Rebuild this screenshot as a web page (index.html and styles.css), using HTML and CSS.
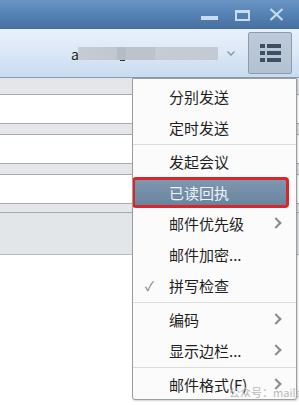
FILE: index.html
```html
<!DOCTYPE html>
<html lang="zh-CN">
<head>
  <meta charset="UTF-8">
  <title>写邮件</title>
  <link rel="stylesheet" href="styles.css">
</head>
<body>
  <div class="window">
    <!-- title bar -->
    <div class="titlebar">
      <span class="ctrl ctrl-min"></span>
      <span class="ctrl ctrl-max"></span>
      <svg class="ctrl-close" width="15" height="13" viewBox="0 0 15 13">
        <path d="M1.5 1 L13.5 12 M13.5 1 L1.5 12" stroke="#c9dcef" stroke-width="2.2" fill="none"/>
      </svg>
    </div>

    <!-- toolbar -->
    <div class="toolbar">
      <div class="account">
        <span class="account-a">a</span>
        <span class="account-blur"></span>
        <span class="account-under"></span>
      </div>
      <svg class="chevron" width="8" height="5" viewBox="0 0 8 5">
        <path d="M0.5 0.5 L4 4 L7.5 0.5" stroke="#8592a2" stroke-width="1.3" fill="none"/>
      </svg>
      <button class="menu-btn">
        <svg width="22" height="19" viewBox="0 0 22 19">
          <rect x="0" y="0" width="5" height="4" fill="#3e4f64"/>
          <rect x="7" y="0" width="14" height="4" fill="#3e4f64"/>
          <rect x="0" y="7" width="5" height="4" fill="#3e4f64"/>
          <rect x="7" y="7" width="14" height="4" fill="#3e4f64"/>
          <rect x="0" y="14" width="5" height="4" fill="#3e4f64"/>
          <rect x="7" y="14" width="14" height="4" fill="#3e4f64"/>
        </svg>
      </button>
    </div>

    <!-- form rows behind the menu -->
    <div class="content">
      <div class="band band-top"></div>
      <div class="field"></div>
      <div class="band"></div>
      <div class="field"></div>
      <div class="band"></div>
      <div class="field"></div>
      <div class="band band-thin"></div>
      <div class="attach"></div>
      <div class="body-area"></div>
    </div>

    <!-- drop down menu -->
    <div class="menu">
      <div class="item">分别发送</div>
      <div class="item">定时发送</div>
      <div class="sep"></div>
      <div class="item">发起会议</div>
      <div class="item item-active">已读回执</div>
      <div class="item">邮件优先级<span class="arrow"></span></div>
      <div class="item">邮件加密...</div>
      <div class="item"><span class="check">✓</span>拼写检查</div>
      <div class="sep"></div>
      <div class="item">编码<span class="arrow"></span></div>
      <div class="item">显示边栏...<span class="arrow"></span></div>
      <div class="sep"></div>
      <div class="item">邮件格式(F)<span class="arrow"></span></div>
    </div>

    <div class="watermark">公众号：mailabc</div>
  </div>
</body>
</html>
```

FILE: styles.css
```css
body {
  margin: 0;
  font-family: "Noto Sans CJK SC", "Noto Sans", sans-serif;
  background: #ffffff;
}
.window {
  position: relative;
  width: 299px;
  height: 405px;
  overflow: hidden;
}

/* title bar */
.titlebar {
  height: 29px;
  background: linear-gradient(180deg, #6994c4 0%, #5582b5 50%, #456f9f 100%);
  display: flex;
  align-items: flex-start;
  justify-content: flex-end;
}
.ctrl {
  display: block;
}
.ctrl-min {
  width: 17px;
  height: 4px;
  margin-top: 16px;
  background: #c9dcef;
}
.ctrl-max {
  width: 11px;
  height: 6px;
  margin: 10px 0 0 17px;
  border: 2px solid #c9dcef;
  border-top-width: 3px;
}
.ctrl-close {
  margin: 8px 15px 0 19px;
}

/* toolbar */
.toolbar {
  height: 48px;
  border-bottom: 1px solid #8a9bb0;
  background: linear-gradient(180deg, #e8f1fb 0%, #dbe8f6 50%, #c8dbef 100%);
  display: flex;
  align-items: center;
}
.account {
  position: relative;
  display: flex;
  align-items: center;
  margin-left: 71px;
  height: 20px;
}
.account-a {
  font-size: 14px;
  color: #222;
  line-height: 14px;
  margin-top: 2px;
}
.account-blur {
  width: 140px;
  height: 13px;
  margin-left: -1px;
  background: linear-gradient(90deg, #c5ccd4 0%, #c0c7cf 28%, #b4bcc5 28%, #b4bcc5 34%, #bcc3cb 34%, #bcc3cb 55%, #c6ccd3 55%, #c3cad1 100%);
}
.account-under {
  position: absolute;
  left: 49px;
  top: 17px;
  width: 5px;
  height: 1px;
  background: #333;
}
.chevron {
  margin-left: 9px;
}
.menu-btn {
  margin-left: 13px;
  width: 44px;
  height: 42px;
  padding: 0;
  border: 1px solid #8c9cae;
  border-radius: 2px;
  background: linear-gradient(180deg, #bccad9 0%, #b3c2d2 100%);
  display: flex;
  align-items: center;
  justify-content: center;
}
.menu-btn svg {
  margin-left: 2px;
}

/* form rows */
.content {
  display: flex;
  flex-direction: column;
}
.band {
  height: 10px;
  background: #e4e6e9;
  border-bottom: 1px solid #a7abaf;
}
.band-top {
  height: 16px;
}
.band-thin {
  height: 8px;
}
.field {
  height: 28px;
  background: #ffffff;
  border-bottom: 1px solid #a7abaf;
}
.attach {
  height: 41px;
  background: #e3e6e9;
  border-bottom: 1px solid #b6b9bd;
}
.body-area {
  height: 160px;
  background: #ffffff;
}

/* drop down menu */
.menu {
  position: absolute;
  left: 132px;
  top: 78px;
  width: 165px;
  height: 322px;
  box-sizing: border-box;
  padding-top: 2px;
  background: #fbfbfb;
  border: 1px solid #9c9c9c;
  border-radius: 0 0 3px 3px;
  box-shadow: 1px 1px 2px rgba(0, 0, 0, 0.18);
  overflow: hidden;
}
.item {
  position: relative;
  height: 31px;
  line-height: 31px;
  padding-left: 36px;
  font-size: 15px;
  color: #1e1e1e;
}
.item-active {
  box-sizing: border-box;
  margin: 0 7px 0 -1px;
  padding-left: 34px;
  line-height: 25px;
  border: 3px solid #d8262b;
  border-radius: 4px;
  background: linear-gradient(180deg, #7f97b0 0%, #6a84a0 100%);
  color: #eef3f8;
}
.sep {
  height: 1px;
  margin: 1px 0;
  background: #dddddd;
}
.arrow {
  position: absolute;
  right: 16px;
  top: 11px;
  width: 6px;
  height: 6px;
  border-top: 2px solid #8c8c8c;
  border-right: 2px solid #8c8c8c;
  transform: rotate(45deg);
}
.check {
  position: absolute;
  left: 12px;
  top: 0;
  font-size: 13px;
  color: #7a7a7a;
}

.watermark {
  position: absolute;
  left: 229px;
  top: 384px;
  font-size: 11px;
  color: #b9b9b9;
  white-space: nowrap;
}
```
